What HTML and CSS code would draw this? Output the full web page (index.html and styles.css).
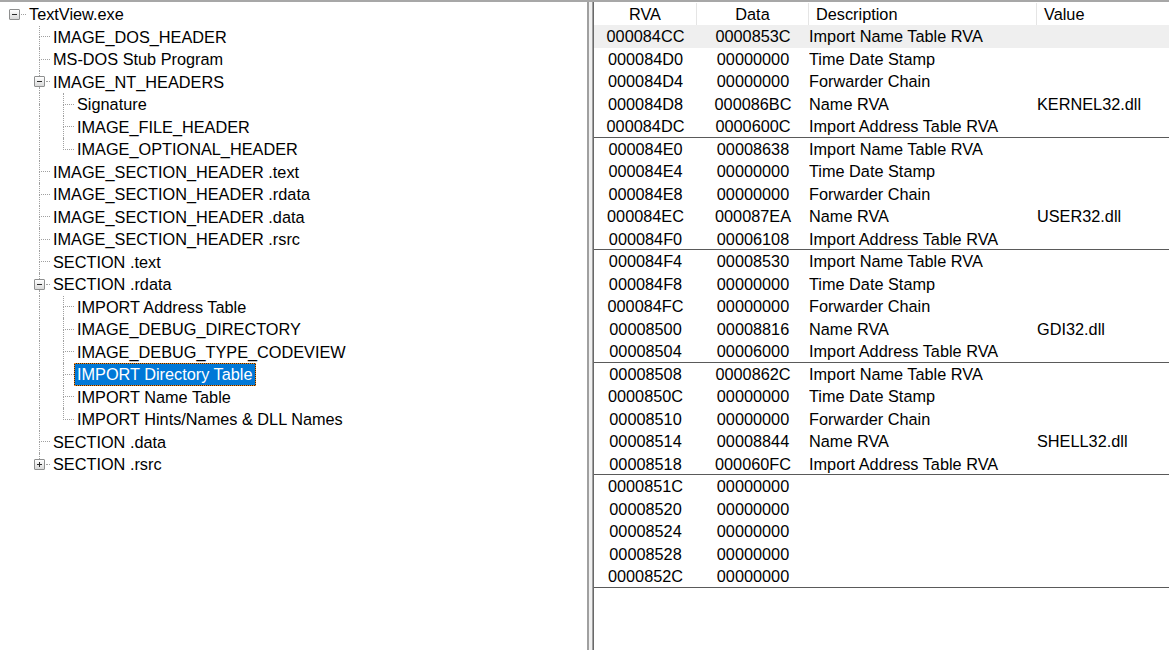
FILE: index.html
```html
<!DOCTYPE html>
<html>
<head>
<meta charset="utf-8">
<title>TextView.exe</title>
<link rel="stylesheet" href="styles.css">
</head>
<body>
<div class="app">
  <div class="tree">
    <div class="node"><div class="g x root"><i class="up none"></i><span class="mid"><span class="box minus"></span><b class="dash"></b></span><i class="dn none"></i></div><span class="label">TextView.exe</span></div>
    <div class="node"><div class="g"></div><div class="g tee"><i class="up"></i><i class="dn"></i></div><span class="label">IMAGE_DOS_HEADER</span></div>
    <div class="node"><div class="g"></div><div class="g tee"><i class="up"></i><i class="dn"></i></div><span class="label">MS-DOS Stub Program</span></div>
    <div class="node"><div class="g"></div><div class="g x"><i class="up"></i><span class="mid"><span class="box minus"></span><b class="dash"></b></span><i class="dn"></i></div><span class="label">IMAGE_NT_HEADERS</span></div>
    <div class="node"><div class="g"></div><div class="g pipe"><i class="up"></i><i class="dn"></i></div><div class="g tee"><i class="up"></i><i class="dn"></i></div><span class="label">Signature</span></div>
    <div class="node"><div class="g"></div><div class="g pipe"><i class="up"></i><i class="dn"></i></div><div class="g tee"><i class="up"></i><i class="dn"></i></div><span class="label">IMAGE_FILE_HEADER</span></div>
    <div class="node"><div class="g"></div><div class="g pipe"><i class="up"></i><i class="dn"></i></div><div class="g elbow"><i class="up"></i><i class="dn"></i></div><span class="label">IMAGE_OPTIONAL_HEADER</span></div>
    <div class="node"><div class="g"></div><div class="g tee"><i class="up"></i><i class="dn"></i></div><span class="label">IMAGE_SECTION_HEADER .text</span></div>
    <div class="node"><div class="g"></div><div class="g tee"><i class="up"></i><i class="dn"></i></div><span class="label">IMAGE_SECTION_HEADER .rdata</span></div>
    <div class="node"><div class="g"></div><div class="g tee"><i class="up"></i><i class="dn"></i></div><span class="label">IMAGE_SECTION_HEADER .data</span></div>
    <div class="node"><div class="g"></div><div class="g tee"><i class="up"></i><i class="dn"></i></div><span class="label">IMAGE_SECTION_HEADER .rsrc</span></div>
    <div class="node"><div class="g"></div><div class="g tee"><i class="up"></i><i class="dn"></i></div><span class="label">SECTION .text</span></div>
    <div class="node"><div class="g"></div><div class="g x"><i class="up"></i><span class="mid"><span class="box minus"></span><b class="dash"></b></span><i class="dn"></i></div><span class="label">SECTION .rdata</span></div>
    <div class="node"><div class="g"></div><div class="g pipe"><i class="up"></i><i class="dn"></i></div><div class="g tee"><i class="up"></i><i class="dn"></i></div><span class="label">IMPORT Address Table</span></div>
    <div class="node"><div class="g"></div><div class="g pipe"><i class="up"></i><i class="dn"></i></div><div class="g tee"><i class="up"></i><i class="dn"></i></div><span class="label">IMAGE_DEBUG_DIRECTORY</span></div>
    <div class="node"><div class="g"></div><div class="g pipe"><i class="up"></i><i class="dn"></i></div><div class="g tee"><i class="up"></i><i class="dn"></i></div><span class="label">IMAGE_DEBUG_TYPE_CODEVIEW</span></div>
    <div class="node"><div class="g"></div><div class="g pipe"><i class="up"></i><i class="dn"></i></div><div class="g tee"><i class="up"></i><i class="dn"></i></div><span class="label selected">IMPORT Directory Table</span></div>
    <div class="node"><div class="g"></div><div class="g pipe"><i class="up"></i><i class="dn"></i></div><div class="g tee"><i class="up"></i><i class="dn"></i></div><span class="label">IMPORT Name Table</span></div>
    <div class="node"><div class="g"></div><div class="g pipe"><i class="up"></i><i class="dn"></i></div><div class="g elbow"><i class="up"></i><i class="dn"></i></div><span class="label">IMPORT Hints/Names &amp; DLL Names</span></div>
    <div class="node"><div class="g"></div><div class="g tee"><i class="up"></i><i class="dn"></i></div><span class="label">SECTION .data</span></div>
    <div class="node"><div class="g"></div><div class="g x"><i class="up"></i><span class="mid"><span class="box plus"></span><b class="dash"></b></span><i class="dn none"></i></div><span class="label">SECTION .rsrc</span></div>
  </div>
  <div class="splitter"></div>
  <div class="list">
    <div class="hdr">
      <div class="hc c">RVA</div>
      <div class="hc c">Data</div>
      <div class="hc">Description</div>
      <div class="hc last">Value</div>
    </div>
    <div class="grp">
      <div class="row hot"><span class="c">000084CC</span><span class="c">0000853C</span><span>Import Name Table RVA</span><span></span></div>
      <div class="row"><span class="c">000084D0</span><span class="c">00000000</span><span>Time Date Stamp</span><span></span></div>
      <div class="row"><span class="c">000084D4</span><span class="c">00000000</span><span>Forwarder Chain</span><span></span></div>
      <div class="row"><span class="c">000084D8</span><span class="c">000086BC</span><span>Name RVA</span><span>KERNEL32.dll</span></div>
      <div class="row"><span class="c">000084DC</span><span class="c">0000600C</span><span>Import Address Table RVA</span><span></span></div>
    </div>
    <div class="grp">
      <div class="row"><span class="c">000084E0</span><span class="c">00008638</span><span>Import Name Table RVA</span><span></span></div>
      <div class="row"><span class="c">000084E4</span><span class="c">00000000</span><span>Time Date Stamp</span><span></span></div>
      <div class="row"><span class="c">000084E8</span><span class="c">00000000</span><span>Forwarder Chain</span><span></span></div>
      <div class="row"><span class="c">000084EC</span><span class="c">000087EA</span><span>Name RVA</span><span>USER32.dll</span></div>
      <div class="row"><span class="c">000084F0</span><span class="c">00006108</span><span>Import Address Table RVA</span><span></span></div>
    </div>
    <div class="grp">
      <div class="row"><span class="c">000084F4</span><span class="c">00008530</span><span>Import Name Table RVA</span><span></span></div>
      <div class="row"><span class="c">000084F8</span><span class="c">00000000</span><span>Time Date Stamp</span><span></span></div>
      <div class="row"><span class="c">000084FC</span><span class="c">00000000</span><span>Forwarder Chain</span><span></span></div>
      <div class="row"><span class="c">00008500</span><span class="c">00008816</span><span>Name RVA</span><span>GDI32.dll</span></div>
      <div class="row"><span class="c">00008504</span><span class="c">00006000</span><span>Import Address Table RVA</span><span></span></div>
    </div>
    <div class="grp">
      <div class="row"><span class="c">00008508</span><span class="c">0000862C</span><span>Import Name Table RVA</span><span></span></div>
      <div class="row"><span class="c">0000850C</span><span class="c">00000000</span><span>Time Date Stamp</span><span></span></div>
      <div class="row"><span class="c">00008510</span><span class="c">00000000</span><span>Forwarder Chain</span><span></span></div>
      <div class="row"><span class="c">00008514</span><span class="c">00008844</span><span>Name RVA</span><span>SHELL32.dll</span></div>
      <div class="row"><span class="c">00008518</span><span class="c">000060FC</span><span>Import Address Table RVA</span><span></span></div>
    </div>
    <div class="grp">
      <div class="row"><span class="c">0000851C</span><span class="c">00000000</span><span></span><span></span></div>
      <div class="row"><span class="c">00008520</span><span class="c">00000000</span><span></span><span></span></div>
      <div class="row"><span class="c">00008524</span><span class="c">00000000</span><span></span><span></span></div>
      <div class="row"><span class="c">00008528</span><span class="c">00000000</span><span></span><span></span></div>
      <div class="row"><span class="c">0000852C</span><span class="c">00000000</span><span></span><span></span></div>
    </div>
  </div>
</div>
</body>
</html>
```

FILE: styles.css
```css
html, body {
  margin: 0;
  padding: 0;
  background: #fff;
  overflow: hidden;
}
body {
  font-family: "Liberation Sans", Arial, sans-serif;
  font-size: 16.3px;
  color: #000;
}
.app {
  display: flex;
  width: 1169px;
  height: 650px;
  box-sizing: border-box;
  border-top: 2px solid #a7a7a7;
}

/* ---------- tree ---------- */
.tree {
  flex: none;
  width: 585px;
  border-right: 2px solid #a0a0a0;
  padding: 1px 0 0 2px;
  background: #fff;
}
.node {
  display: flex;
  height: 22.5px;
  align-items: stretch;
}
.g {
  width: 24px;
  flex: none;
  display: flex;
  flex-direction: column;
}
.g i {
  display: block;
  flex: 1 1 0;
  box-sizing: border-box;
  margin-left: 13px;
  width: 11px;
}
.pipe i,
.tee i,
.elbow i.up,
.x i {
  border-left: 1px dotted #a0a0a0;
}
.tee i.up,
.elbow i.up {
  border-bottom: 1px dotted #a0a0a0;
}
.x i.none {
  border-left: none;
}
.mid {
  display: flex;
  align-items: center;
  height: 11px;
  margin-left: 8px;
  flex: none;
}
.root .mid {
  margin-left: 7px;
}
.dash {
  display: block;
  width: 5px;
  height: 0;
  border-top: 1px dotted #a0a0a0;
  margin-left: 1px;
}
.box {
  width: 11px;
  height: 11px;
  box-sizing: border-box;
  border: 1px solid #8e8f8f;
  border-radius: 1px;
  background: linear-gradient(#ffffff, #d9d9d9);
  display: grid;
  place-items: center;
  flex: none;
}
.box::before,
.box::after {
  content: "";
  grid-area: 1 / 1;
  background: #2b2b2b;
}
.box::before {
  width: 5px;
  height: 1px;
}
.plus::after {
  width: 1px;
  height: 5px;
}
.label {
  box-sizing: border-box;
  height: 22.5px;
  line-height: 21.5px;
  padding: 1px 3px 0;
  white-space: nowrap;
}
.selected {
  background: #0078d7;
  color: #fff;
  outline: 1px dotted #f08a28;
  outline-offset: -1px;
  box-shadow: inset 0 0 0 1px #3a2a10;
}

/* ---------- splitter ---------- */
.splitter {
  width: 3px;
  flex: none;
  background: #f0f0f0;
  border-right: 1px solid #a0a0a0;
}

/* ---------- list ---------- */
.list {
  flex: 1;
  border-left: 1px solid #696969;
  background: #fff;
  min-width: 0;
}
.hdr,
.row {
  display: grid;
  grid-template-columns: 103px 112px 228px 1fr;
}
.hdr {
  height: 23px;
  line-height: 22px;
  padding-top: 1px;
  box-sizing: border-box;
}
.hc {
  border-right: 1px solid #e5e5e5;
  padding-left: 7px;
  white-space: nowrap;
}
.hc.c {
  padding-left: 0;
  text-align: center;
}
.hc.last {
  border-right: none;
}
.row {
  box-sizing: border-box;
  height: 22.5px;
  line-height: 21.5px;
  padding-top: 1px;
  white-space: nowrap;
}
.row span {
  overflow: hidden;
}
.row .c {
  text-align: center;
}
.row.hot {
  background: #efefef;
}
.grp .row:last-child {
  border-bottom: 1px solid #5a5a5a;
}
```
